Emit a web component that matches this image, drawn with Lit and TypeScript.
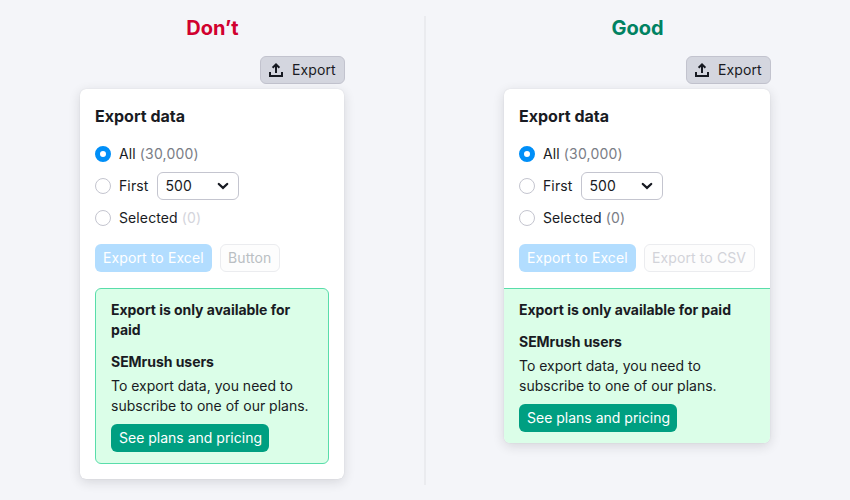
import { LitElement, html, css, svg } from "lit";
import { customElement, property } from "lit/decorators.js";
import { classMap } from "lit/directives/class-map.js";

const uploadIcon = html`<svg class="upload" width="16" height="16" viewBox="0 0 16 16">
  ${svg`<path d="M2 10v4h12v-4M8 11V2.6M4.6 5.8L8 2.4l3.4 3.4" fill="none" stroke="#171a22" stroke-width="2"/>`}
</svg>`;

const chevronIcon = html`<svg width="12" height="8" viewBox="0 0 12 8">
  ${svg`<path d="M1.8 2L6 5.9l4.2-3.9" fill="none" stroke="#171a22" stroke-width="2.3" stroke-linecap="round"/>`}
</svg>`;

@customElement("export-example")
export class ExportExample extends LitElement {
  @property({ type: Boolean }) good = false;
  @property() heading = "";
  @property() secondary = "";

  static styles = css`
    :host { display: block; }
    .column { display: flex; flex-direction: column; width: 265px; line-height: 18px; }
    .good.column { width: 267px; }
    .title {
      margin: 16px 0 0;
      height: 24px;
      line-height: 24px;
      font-size: 20px;
      font-weight: 700;
      text-align: center;
      color: #d1002f;
    }
    .good .title { color: #008262; }
    .btn {
      box-sizing: border-box;
      height: 28px;
      display: flex;
      align-items: center;
      padding: 0 7px;
      border: 1px solid transparent;
      border-radius: 6px;
      font-size: 14px;
      letter-spacing: 0.11px;
      white-space: nowrap;
    }
    .trigger {
      align-self: flex-end;
      width: 85px;
      margin-top: 16px;
      gap: 8px;
      background: #d4d6df;
      border-color: #c2c3ce;
    }
    .upload { flex: none; }
    .card {
      box-sizing: border-box;
      width: 264px;
      height: 390px;
      margin-top: 5px;
      padding: 15px 15px 0;
      background: #fff;
      border-radius: 6px;
      box-shadow: 0 0 1px rgba(25, 27, 35, 0.16), 0 3px 12px rgba(25, 27, 35, 0.14);
    }
    .good .card { width: 266px; height: 354px; overflow: hidden; }
    .card-title { height: 24px; line-height: 24px; font-size: 16px; font-weight: 700; }
    .options { display: flex; flex-direction: column; gap: 4px; margin-top: 12px; }
    .option { display: flex; align-items: center; height: 28px; letter-spacing: 0.11px; }
    .radio {
      box-sizing: border-box;
      width: 16px;
      height: 16px;
      margin-right: 8px;
      border: 1px solid #c4c5cf;
      border-radius: 50%;
      background: #fff;
    }
    .radio.on { border: 5px solid #008ff8; }
    .count { margin-left: 4px; letter-spacing: 0.2px; color: #7a7d86; }
    .count.faint { color: #d4d5dc; }
    .select {
      box-sizing: border-box;
      display: flex;
      align-items: center;
      justify-content: space-between;
      width: 82px;
      height: 28px;
      margin-left: 9px;
      padding: 0 9px 0 7px;
      border: 1px solid #c4c5cf;
      border-radius: 6px;
    }
    .actions { display: flex; gap: 8px; margin-top: 12px; }
    .primary { width: 117px; background: #b2ddff; color: #fff; }
    .plain { width: 60px; background: #fdfdfd; border-color: #ebecef; color: #babfc3; }
    .good .plain { width: 111px; color: #d2d3d9; }
    .notice {
      box-sizing: border-box;
      display: flex;
      flex-direction: column;
      align-items: flex-start;
      height: 176px;
      margin-top: 16px;
      padding: 11px 15px;
      background: #dbfee8;
      border: 1px solid #59ddaa;
      border-radius: 6px;
    }
    .good .notice {
      height: 155px;
      margin: 16px -15px 0;
      border-width: 1px 0 0;
      border-radius: 0;
    }
    .strong { font-weight: 700; line-height: 20px; letter-spacing: -0.04px; }
    .users { margin-top: 12px; }
    .text { margin-top: 4px; line-height: 20px; letter-spacing: 0; white-space: nowrap; }
    .cta { width: 158px; margin-top: 8px; background: #009f81; color: #fff; letter-spacing: 0; }
  `;

  render() {
    return html`
      <div class=${classMap({ column: true, good: this.good })}>
        <h2 class="title">${this.heading}</h2>
        <div class="btn trigger">${uploadIcon}<span>Export</span></div>
        <div class="card">
          <div class="card-title">Export data</div>
          <div class="options">
            <div class="option"><i class="radio on"></i>All<span class="count">(30,000)</span></div>
            <div class="option">
              <i class="radio"></i>First
              <div class="select"><span>500</span>${chevronIcon}</div>
            </div>
            <div class="option">
              <i class="radio"></i>Selected<span class=${classMap({ count: true, faint: !this.good })}>(0)</span>
            </div>
          </div>
          <div class="actions">
            <div class="btn primary">Export to Excel</div>
            <div class="btn plain">${this.secondary}</div>
          </div>
          <div class="notice">
            <div class="strong">Export is only available for paid</div>
            <div class="strong users">SEMrush users</div>
            <div class="text">To export data, you need to<br />subscribe to one of our plans.</div>
            <div class="btn cta">See plans and pricing</div>
          </div>
        </div>
      </div>
    `;
  }
}

@customElement("app-root")
export class AppRoot extends LitElement {
  static styles = css`
    :host {
      display: grid;
      grid-template-columns: 424px 2px 424px;
      box-sizing: border-box;
      width: 850px;
      height: 500px;
      overflow: hidden;
      background: #f4f5f9;
      color: #191b23;
      font: 14px Inter, "Liberation Sans", sans-serif;
    }
    .left { margin-left: 80px; }
    .right { margin-left: 78px; }
    .divider { margin: 16px 0 15px; background: #eaebef; }
  `;

  render() {
    return html`
      <export-example class="left" heading="Don’t" secondary="Button"></export-example>
      <div class="divider"></div>
      <export-example class="right" good heading="Good" secondary="Export to CSV"></export-example>
    `;
  }
}
